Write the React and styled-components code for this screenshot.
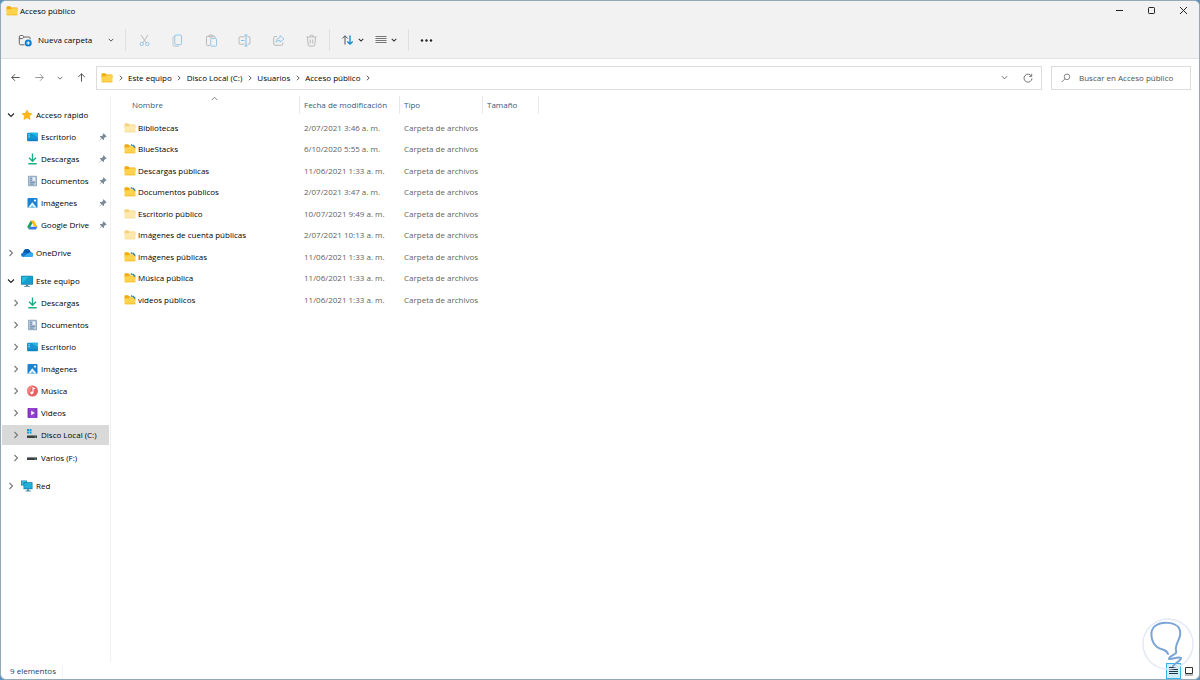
import React from "react";
import styled, { createGlobalStyle } from "styled-components";

const GlobalStyle = createGlobalStyle`
  * {
    box-sizing: border-box;
  }

  body {
    margin: 0;
    background: #5b93bd;
    color: #000;
    font-family: "Open Sans", "Segoe UI", sans-serif;
    font-size: 8px;
    line-height: 12px;
  }

  button,
  input {
    margin: 0;
    padding: 0;
    border: 0;
    background: none;
    color: inherit;
    font: inherit;
  }

  svg {
    display: block;
    flex: none;
  }
`;

const Window = styled.div`
  position: relative;
  display: flex;
  flex-direction: column;
  min-height: 100vh;
  border: 1px solid #93a9b5;
  border-radius: 6px;
  background: #fff;
  overflow: hidden;
`;

const Chrome = styled.header`
  background: #f2f2f2;
  border-bottom: 1px solid #e2e2e2;
`;

const TitleBar = styled.div`
  display: flex;
  align-items: center;
  justify-content: space-between;
  height: 19px;
  padding-left: 5px;
`;

const Title = styled.h1`
  display: flex;
  align-items: center;
  gap: 2px;
  margin: 0;
  font-size: 8px;
  font-weight: 500;
`;

const WindowControls = styled.div`
  display: flex;
`;

const ControlButton = styled.button`
  display: flex;
  align-items: center;
  justify-content: center;
  width: 32px;
  height: 19px;
`;

const Toolbar = styled.div`
  display: flex;
  align-items: center;
  height: 38px;
  padding: 2px 12px 0;
`;

const NewButton = styled.button`
  display: flex;
  align-items: center;
  gap: 6px;
  width: 101px;
  padding-left: 5px;
  font-weight: 500;

  svg:last-child {
    margin-left: auto;
  }
`;

const ToolDivider = styled.span`
  width: 1px;
  height: 22px;
  margin-left: ${props => props.$before}px;
  margin-right: ${props => props.$after}px;
  background: #e0e0e0;
`;

const ToolGroup = styled.div`
  display: flex;
`;

const ToolButton = styled.button`
  display: flex;
  align-items: center;
  justify-content: center;
  gap: 4px;
  width: ${props => (props.$wide ? "34px" : "33px")};
  height: 24px;
`;

const NavRow = styled.div`
  display: flex;
  align-items: center;
  height: 37px;
  padding: 0 8px 0 2px;
`;

const NavButton = styled.button`
  display: flex;
  align-items: center;
  justify-content: center;
  width: ${props => (props.$narrow ? "18px" : "24px")};
  height: 24px;
`;

const AddressBar = styled.div`
  display: flex;
  flex: 1;
  align-items: center;
  height: 24px;
  margin: 0 9px 0 3px;
  padding: 0 1px 0 4px;
  border: 1px solid #dcdcdc;
`;

const Crumbs = styled.ol`
  display: flex;
  flex: 1;
  align-items: center;
  margin: 0;
  padding: 0;
  list-style: none;
  font-weight: 500;

  li {
    display: flex;
    align-items: center;
  }

  a {
    color: inherit;
    text-decoration: none;
  }
`;

const CrumbArrow = styled.span`
  display: flex;
  justify-content: center;
  width: 15px;
`;

const SearchBox = styled.label`
  display: flex;
  align-items: center;
  gap: 8px;
  width: 140px;
  height: 24px;
  padding: 0 9px;
  border: 1px solid #dcdcdc;

  input {
    flex: 1;
    min-width: 0;
    outline: 0;
  }

  input::placeholder {
    color: #505050;
    opacity: 1;
  }
`;

const Body = styled.div`
  display: flex;
  flex: 1;
`;

const Sidebar = styled.nav`
  width: 110px;
  padding: 9px 1px 0;
  border-right: 1px solid #f0f0f0;
`;

const TreeGroup = styled.ul`
  display: flex;
  flex-direction: column;
  gap: 3px;
  margin: 0 0 9px;
  padding: 0;
  list-style: none;
`;

const TreeRow = styled.li`
  display: flex;
  align-items: center;
  height: ${props => (props.$selected ? "20px" : "19px")};
  padding-left: ${props => (props.$nested ? "5px" : "0")};
  padding-right: 2px;
  background: ${props => (props.$selected ? "#d9d9d9" : "transparent")};
`;

const Expander = styled.button`
  display: flex;
  align-items: center;
  justify-content: center;
  width: 18px;
  height: 19px;
`;

const ExpanderSpace = styled.span`
  width: 18px;
`;

const TreeLink = styled.a`
  display: flex;
  flex: 1;
  align-items: center;
  gap: 2px;
  color: inherit;
  font-weight: 500;
  text-decoration: none;
  white-space: nowrap;
`;

const Content = styled.main`
  flex: 1;
  padding-left: 11px;
`;

const FileTable = styled.table`
  border-collapse: collapse;
  table-layout: fixed;
  width: 417px;
  text-align: left;

  th,
  td {
    padding: 0 0 0 4px;
    font-weight: 400;
    white-space: nowrap;
  }

  td {
    color: #5f5f5f;
  }

  tbody tr {
    height: 21px;
  }

  tbody tr:nth-child(even) {
    height: 22px;
  }
`;

const NameCol = styled.col`
  width: 178px;
`;

const DateCol = styled.col`
  width: 100px;
`;

const TypeCol = styled.col`
  width: 83px;
`;

const SizeCol = styled.col`
  width: 56px;
`;

const HeadCell = styled.th`
  position: relative;
  height: 21px;
  color: #3a5779;
  vertical-align: top;

  > span {
    display: block;
    height: 18px;
    padding-left: ${props => (props.$first ? "6px" : "0")};
    border-right: 1px solid #e8e8e8;
    line-height: 18px;
  }
`;

const SortMark = styled.svg`
  position: absolute;
  top: 0;
  left: 50%;
`;

const FileName = styled.a`
  display: flex;
  align-items: center;
  gap: 2px;
  margin-left: -2px;
  color: #000;
  font-weight: 500;
  text-decoration: none;
`;

const StatusBar = styled.footer`
  display: flex;
  align-items: center;
  justify-content: space-between;
  height: 17px;
  padding: 0 3px 0 9px;
  color: #1a3f60;
`;

const Count = styled.span`
  padding-right: 6px;
  border-right: 1px solid #f2f2f2;
  font-weight: 500;
`;

const ViewButtons = styled.div`
  display: flex;
`;

const ViewButton = styled.button`
  display: flex;
  align-items: center;
  justify-content: center;
  width: 15px;
  height: 16px;
  border: 1px solid ${props => (props.$active ? "#35b3ea" : "transparent")};
  background: ${props => (props.$active ? "#cfeefa" : "transparent")};
`;

const Watermark = styled.svg`
  position: absolute;
  right: 4px;
  bottom: 8px;
  pointer-events: none;
`;

const chevronPaths = {
  right: "M2.5 1 5.5 4 2.5 7",
  down: "M1 2.5 4 5.5 7 2.5"
};

const Chevron = ({ to = "right", size = 7, color = "#333", weight = 1.1 }) => (
  <svg width={size} height={size} viewBox="0 0 8 8" fill="none">
    <path d={chevronPaths[to]} stroke={color} strokeWidth={weight} />
  </svg>
);

const FolderIcon = ({ size = 12, variant = "full" }) => {
  const pale = variant === "pale";
  return (
    <svg width={size} height={size} viewBox="0 0 12 12">
      <path
        d="M.5 2.2q0-.9.9-.9h2.8l1.3 1.2h5.1q.9 0 .9.9V6H.5z"
        fill={pale ? "#f5d37c" : "#f0ab0c"}
      />
      {variant === "linked" && <path d="M6.5 1.8h3.8l1.2 1.2V5h-5z" fill="#e4f0ee" />}
      <path
        d="M.5 4.2h4.2l1.2-.9h4.7q.9 0 .9.9v5.2q0 .9-.9.9H1.4q-.9 0-.9-.9z"
        fill={pale ? "#fde9ae" : "#ffd34e"}
      />
      <path d="M.7 9.8h10.6" stroke={pale ? "#f7dc96" : "#f5bd2d"} strokeWidth=".8" />
      {variant === "linked" && (
        <path d="M7 1.5 8.2 2.6M8.8 2 11 4.6" stroke="#227fa8" strokeWidth="1.2" />
      )}
    </svg>
  );
};

const PinIcon = () => (
  <svg width="8" height="8" viewBox="0 0 8 8">
    <path
      d="M4.6.3 7.7 3.4 6.9 4 6.3 3.9 5 5.2 5 6.7 4.3 7.1 2.8 5.6.7 7.6.4 7.3 2.4 5.2.9 3.7 1.3 3 2.8 3 4.1 1.7 4 1.1z"
      fill="#7b8b99"
    />
  </svg>
);

const Drive = ({ y = 5 }) => (
  <>
    <rect x="2" y={y} width="10" height="3" rx=".5" fill="#3b3f43" />
    <path d={`M2 ${y + 0.4}h10`} stroke="#a4a9ad" strokeWidth=".8" />
    <path d={`M9.5 ${y + 2}h1.5`} stroke="#69d28b" strokeWidth=".7" />
  </>
);

const treeDrawings = {
  star: (
    <path
      d="M7 2 8.5 5.1 12 5.6 9.5 8 10.1 11.5 7 9.8 3.9 11.5 4.5 8 2 5.6 5.5 5.1z"
      fill="#fdb813"
      stroke="#f2a00d"
      strokeWidth=".5"
    />
  ),
  desktop: (
    <>
      <rect x="2" y="2.8" width="11" height="8.4" rx=".8" fill="#1595d3" />
      <path d="M6 2.8h6.2q.8 0 .8.8v3.9z" fill="#28b7e5" />
      <path d="M3.5 4.8h1.2M3.5 6.8h1.2" stroke="#d8f4ff" />
      <path d="M3.5 10.1h8" stroke="#0768a8" strokeWidth=".8" />
    </>
  ),
  download: (
    <path
      d="M7.5 1.5V9M4 5.8 7.5 9.3 11 5.8M3.3 11.8h8.4"
      fill="none"
      stroke="#1cae85"
      strokeWidth="1.4"
    />
  ),
  document: (
    <>
      <rect x="3" y="1.8" width="9" height="10.4" rx=".8" fill="#91aac2" />
      <path d="M4 2.8h7v8.4H4z" fill="#b9cbdc" />
      <path d="M5 4.3h2M5 6.3h2M5 8.3h5M5 10.1h3.5" stroke="#5d7d9d" strokeWidth=".9" />
      <path d="M7.8 3.6h2.2v3H7.8z" fill="#eff6fb" />
    </>
  ),
  picture: (
    <>
      <rect x="2.5" y="2" width="10" height="10" rx="1" fill="#1b83d3" />
      <path d="M3 11.7 7.3 6.2l4.5 5.5z" fill="#e7f6ff" />
      <path d="M5.3 11.8 7.3 9.3l2.2 2.5z" fill="#67b8ec" />
      <circle cx="10" cy="4.6" r="1.1" fill="#fff" />
    </>
  ),
  drive: (
    <>
      <path d="M5.8 2.5h3.2l3.5 6.2H9.2z" fill="#fbc116" />
      <path d="M5.8 2.5 2.3 8.7 3.9 11.4 7.4 5.2z" fill="#1aa260" />
      <path d="M5.4 8.7h7.1l-1.6 2.7H3.9z" fill="#3978e8" />
    </>
  ),
  cloud: (
    <>
      <path
        d="M3.6 11Q1 11 1 8.8 1 6.8 3.2 6.4 4 3 7 3q2.6 0 3.5 2.9 2.6.2 2.6 2.5 0 2.6-2.5 2.6z"
        fill="#1579cf"
      />
      <path d="M3.2 6.4Q4 3 7 3q2.6 0 3.5 2.9L7.6 7.5z" fill="#075cae" />
      <path d="M3 11 8 7.3q4.5-2 5.1 1.1 0 2.6-2.5 2.6z" fill="#35a9eb" />
    </>
  ),
  computer: (
    <>
      <rect x="1" y="1.8" width="12" height="9" rx=".8" fill="#1681ad" />
      <path d="M1.8 2.6h10.4v6.8H1.8z" fill="#27bbdc" />
      <path d="M1.8 9.4 9 2.6h3.2v6.8z" fill="#179dcb" />
      <path d="M5.8 10.8h2.4v1.2H10v.8H4v-.8h1.8z" fill="#4e8194" />
    </>
  ),
  music: (
    <>
      <circle cx="7.5" cy="7" r="5.5" fill="#e65f63" />
      <path d="M3.5 10.7A5.5 5.5 0 0 1 7.5 1.5z" fill="#f1877d" />
      <path d="M8 9V3.7l2 1.3" fill="none" stroke="#fff" strokeWidth="1.1" />
      <circle cx="6.7" cy="9" r="1.4" fill="#fff" />
    </>
  ),
  video: (
    <>
      <rect x="2.5" y="2" width="10" height="10" rx=".7" fill="#9541cf" />
      <path d="M3.8 2.5v9M11.2 2.5v9" stroke="#54208f" strokeDasharray="1 1" />
      <path d="m6.2 4.8 3.6 2.2-3.6 2.3z" fill="#fff" />
    </>
  ),
  system: (
    <>
      <path d="M2 1h2v2H2zM4.5 1h2v2h-2zM2 3.5h2v2H2zM4.5 3.5h2v2h-2z" fill="#159bd8" />
      <Drive y={7} />
    </>
  ),
  disk: <Drive y={6} />,
  network: (
    <>
      <path d="M1 1.5h6v5H1z" fill="#157fac" />
      <path d="M1.7 2.1h4.7v3.6H1.7z" fill="#34c4dd" />
      <path d="M3.5 3.2H12.5v7H3.5z" fill="#0b7eae" />
      <path d="M4.3 4h7.5v5.4H4.3z" fill="#24afd8" />
      <path d="M7 10.2h2v1.4h1.8v.9h-5v-.9H7z" fill="#4588a0" />
    </>
  )
};

const TreeIcon = ({ name }) => (
  <svg width="14" height="14" viewBox="0 0 14 14">
    {treeDrawings[name]}
  </svg>
);

const toolDrawings = {
  Cortar: (
    <>
      <path d="M3 1 8.4 9M10 1 4.6 9" stroke="#b4b4b4" />
      <circle cx="3.7" cy="10" r="1.7" stroke="#8dc4e8" />
      <circle cx="9.3" cy="10" r="1.7" stroke="#8dc4e8" />
    </>
  ),
  Copiar: (
    <>
      <path d="M4 2.5H3q-1 0-1 1v7.7q0 1 1 1h5" stroke="#b9c3c9" />
      <rect x="3.8" y="1" width="6.7" height="9.7" rx="1" stroke="#8dc4e8" />
    </>
  ),
  Pegar: (
    <>
      <path d="M5 11.5H2.3q-.8 0-.8-.8V3q0-.8.8-.8h7q.8 0 .8.8v1" stroke="#b4b4b4" />
      <rect x="4" y="1" width="3.8" height="2" rx=".7" stroke="#b4b4b4" />
      <rect x="5.7" y="4.5" width="5.8" height="7.7" rx=".8" stroke="#8dc4e8" />
    </>
  ),
  "Cambiar nombre": (
    <>
      <path d="M6.5 2.8H2q-1 0-1 1v5.4q0 1 1 1h4.5M9.5 2.8H11q1 0 1 1v5.4q0 1-1 1H9.5" stroke="#b4b4b4" />
      <path d="M6.5 1h3M8 1v11M6.5 12h3M3 6.5h3.5" stroke="#72b9e8" />
    </>
  ),
  Compartir: (
    <>
      <path d="M5 2.5H3q-1.3 0-1.3 1.3V10q0 1.3 1.3 1.3h6.5q1.3 0 1.3-1.3V8.5" stroke="#b4b4b4" />
      <path d="M8 1.5 12 5 8 8.3V6.4Q5.5 6.2 4 8.4 4.2 4 8 3.6z" stroke="#8dc4e8" />
    </>
  ),
  Eliminar: (
    <>
      <path d="M1.3 3h10.4M4.5 3q0-1.8 2-1.8t2 1.8M2.5 3.3l.7 7.9q.1.8.9.8h4.8q.8 0 .9-.8l.7-7.9" stroke="#b4b4b4" />
      <path d="M5.3 5.5v4M7.7 5.5v4" stroke="#b4b4b4" />
    </>
  )
};

const ToolIcon = ({ name }) => (
  <svg width="13" height="13" viewBox="0 0 13 13" fill="none" strokeWidth=".9">
    {toolDrawings[name]}
  </svg>
);

const treeGroups = [
  [
    { label: "Acceso rápido", icon: "star", open: true },
    { label: "Escritorio", icon: "desktop", pinned: true },
    { label: "Descargas", icon: "download", pinned: true },
    { label: "Documentos", icon: "document", pinned: true },
    { label: "Imágenes", icon: "picture", pinned: true },
    { label: "Google Drive", icon: "drive", pinned: true }
  ],
  [{ label: "OneDrive", icon: "cloud" }],
  [
    { label: "Este equipo", icon: "computer", open: true },
    { label: "Descargas", icon: "download", nested: true },
    { label: "Documentos", icon: "document", nested: true },
    { label: "Escritorio", icon: "desktop", nested: true },
    { label: "Imágenes", icon: "picture", nested: true },
    { label: "Música", icon: "music", nested: true },
    { label: "Videos", icon: "video", nested: true },
    { label: "Disco Local (C:)", icon: "system", nested: true, selected: true },
    { label: "Varios (F:)", icon: "disk", nested: true }
  ],
  [{ label: "Red", icon: "network" }]
];

const files = [
  { name: "Bibliotecas", date: "2/07/2021 3:46 a. m.", variant: "pale" },
  { name: "BlueStacks", date: "6/10/2020 5:55 a. m.", variant: "linked" },
  { name: "Descargas públicas", date: "11/06/2021 1:33 a. m.", variant: "full" },
  { name: "Documentos públicos", date: "2/07/2021 3:47 a. m.", variant: "linked" },
  { name: "Escritorio público", date: "10/07/2021 9:49 a. m.", variant: "pale" },
  { name: "Imágenes de cuenta públicas", date: "2/07/2021 10:13 a. m.", variant: "pale" },
  { name: "Imágenes públicas", date: "11/06/2021 1:33 a. m.", variant: "linked" },
  { name: "Música pública", date: "11/06/2021 1:33 a. m.", variant: "linked" },
  { name: "videos públicos", date: "11/06/2021 1:33 a. m.", variant: "linked" }
];

const crumbs = ["Este equipo", "Disco Local (C:)", "Usuarios", "Acceso público"];

const WindowHeader = () => (
  <Chrome>
    <TitleBar>
      <Title>
        <FolderIcon />
        Acceso público
      </Title>
      <WindowControls>
        <ControlButton aria-label="Minimizar">
          <svg width="9" height="9" viewBox="0 0 9 9">
            <path d="M1 4.5h7" stroke="#222" />
          </svg>
        </ControlButton>
        <ControlButton aria-label="Maximizar">
          <svg width="9" height="9" viewBox="0 0 9 9">
            <rect x="1.5" y="1.5" width="6" height="6" rx=".8" fill="none" stroke="#222" />
          </svg>
        </ControlButton>
        <ControlButton aria-label="Cerrar">
          <svg width="9" height="9" viewBox="0 0 9 9">
            <path d="m1 1 7 7M8 1 1 8" stroke="#222" />
          </svg>
        </ControlButton>
      </WindowControls>
    </TitleBar>
    <Toolbar>
      <NewButton>
        <svg width="14" height="13" viewBox="0 0 14 13" fill="none">
          <path
            d="M6.5 10.8H2.6q-1.3 0-1.3-1.3V2.8q0-1.3 1.3-1.3h2L6.2 3h4.7q1.3 0 1.3 1.3v1M1.3 4.6h3.3L6.2 3"
            stroke="#555"
            strokeWidth=".9"
          />
          <circle cx="10.2" cy="9" r="3.5" fill="#0b80d0" />
          <path d="M10.2 7.3v3.4M8.5 9h3.4" stroke="#fff" />
        </svg>
        Nueva carpeta
        <Chevron to="down" size={6} />
      </NewButton>
      <ToolDivider $before={11} $after={1} />
      <ToolGroup>
        {Object.keys(toolDrawings).map((name, index) => (
          <ToolButton key={name} $wide={index % 2 === 0} aria-label={name} disabled>
            <ToolIcon name={name} />
          </ToolButton>
        ))}
      </ToolGroup>
      <ToolDivider $before={1} $after={5} />
      <ToolButton $wide aria-label="Ordenar">
        <svg width="13" height="12" viewBox="0 0 13 12" fill="none">
          <path d="M4 10.5V1.8M1.3 4.5 4 1.8l2.7 2.7" stroke="#555" />
          <path d="M9 1.5v8.7M6.3 7.5 9 10.2l2.7-2.7" stroke="#0f86d2" strokeWidth="1.3" />
        </svg>
        <Chevron to="down" size={6} weight={1.4} />
      </ToolButton>
      <ToolButton $wide aria-label="Ver">
        <svg width="12" height="10" viewBox="0 0 12 10">
          <path d="M.5 1.5h11M.5 3.5h11M.5 5.5h11M.5 7.5h11" stroke="#777" />
        </svg>
        <Chevron to="down" size={6} weight={1.4} />
      </ToolButton>
      <ToolDivider $before={5} $after={1} />
      <ToolButton aria-label="Ver más">
        <svg width="13" height="5" viewBox="0 0 13 5" fill="#222">
          <circle cx="2" cy="2.5" r="1.2" />
          <circle cx="6.5" cy="2.5" r="1.2" />
          <circle cx="11" cy="2.5" r="1.2" />
        </svg>
      </ToolButton>
    </Toolbar>
  </Chrome>
);

const Navigation = () => (
  <NavRow>
    <NavButton aria-label="Atrás">
      <svg width="9" height="9" viewBox="0 0 9 9" fill="none">
        <path d="M8.7 4.5H.8M4 1.2.8 4.5 4 7.8" stroke="#555" />
      </svg>
    </NavButton>
    <NavButton aria-label="Adelante">
      <svg width="9" height="9" viewBox="0 0 9 9" fill="none">
        <path d="M.3 4.5h7.9M5 1.2l3.2 3.3L5 7.8" stroke="#999" />
      </svg>
    </NavButton>
    <NavButton $narrow aria-label="Ubicaciones recientes">
      <Chevron to="down" size={6} color="#555" />
    </NavButton>
    <NavButton aria-label="Arriba">
      <svg width="9" height="9" viewBox="0 0 9 9" fill="none">
        <path d="M4.5 8.7V.8M1.2 4 4.5.8 7.8 4" stroke="#555" />
      </svg>
    </NavButton>
    <AddressBar>
      <FolderIcon />
      <Crumbs>
        <li>
          <CrumbArrow>
            <Chevron size={6} />
          </CrumbArrow>
        </li>
        {crumbs.map(crumb => (
          <li key={crumb}>
            <a href="#ruta">{crumb}</a>
            <CrumbArrow>
              <Chevron size={6} />
            </CrumbArrow>
          </li>
        ))}
      </Crumbs>
      <NavButton aria-label="Direcciones anteriores">
        <Chevron to="down" color="#666" />
      </NavButton>
      <NavButton aria-label="Actualizar">
        <svg width="10" height="10" viewBox="0 0 10 10" fill="none">
          <path d="M8.5 3.2A4 4 0 1 0 9 5.3M8.7.8v2.6H6.1" stroke="#777" />
        </svg>
      </NavButton>
    </AddressBar>
    <SearchBox>
      <svg width="10" height="10" viewBox="0 0 10 10" fill="none">
        <circle cx="6" cy="3.8" r="2.8" stroke="#777" strokeWidth=".9" />
        <path d="M4 5.8.8 9" stroke="#777" strokeWidth=".9" />
      </svg>
      <input type="text" aria-label="Buscar" placeholder="Buscar en Acceso público" />
    </SearchBox>
  </NavRow>
);

const TreeItem = ({ item }) => (
  <TreeRow $nested={item.nested || item.pinned} $selected={item.selected}>
    {item.pinned ? (
      <ExpanderSpace />
    ) : (
      <Expander aria-label={`Expandir ${item.label}`}>
        <Chevron
          to={item.open ? "down" : "right"}
          size={8}
          color={item.open ? "#222" : "#777"}
        />
      </Expander>
    )}
    <TreeLink href="#carpeta">
      <TreeIcon name={item.icon} />
      {item.label}
    </TreeLink>
    {item.pinned && <PinIcon />}
  </TreeRow>
);

const FileList = () => (
  <FileTable>
    <colgroup>
      <NameCol />
      <DateCol />
      <TypeCol />
      <SizeCol />
    </colgroup>
    <thead>
      <tr>
        <HeadCell $first aria-sort="ascending">
          <span>Nombre</span>
          <SortMark width="7" height="5" viewBox="0 0 7 5">
            <path d="m.8 4 2.7-2.7L6.2 4" fill="none" stroke="#777" strokeWidth=".9" />
          </SortMark>
        </HeadCell>
        <HeadCell>
          <span>Fecha de modificación</span>
        </HeadCell>
        <HeadCell>
          <span>Tipo</span>
        </HeadCell>
        <HeadCell>
          <span>Tamaño</span>
        </HeadCell>
      </tr>
    </thead>
    <tbody>
      {files.map(file => (
        <tr key={file.name}>
          <td>
            <FileName href="#archivo">
              <FolderIcon variant={file.variant} />
              {file.name}
            </FileName>
          </td>
          <td>{file.date}</td>
          <td>Carpeta de archivos</td>
          <td />
        </tr>
      ))}
    </tbody>
  </FileTable>
);

const App = () => (
  <>
    <GlobalStyle />
    <Window>
      <WindowHeader />
      <Navigation />
      <Body>
        <Sidebar>
          {treeGroups.map(group => (
            <TreeGroup key={group[0].label}>
              {group.map(item => (
                <TreeItem key={item.label} item={item} />
              ))}
            </TreeGroup>
          ))}
        </Sidebar>
        <Content>
          <FileList />
        </Content>
      </Body>
      <StatusBar>
        <Count>9 elementos</Count>
        <ViewButtons>
          <ViewButton $active aria-label="Detalles">
            <svg width="9" height="10" viewBox="0 0 9 10">
              <path d="M0 1.5h9M0 3.5h9M0 5.5h9M0 7.5h9" stroke="#234" />
            </svg>
          </ViewButton>
          <ViewButton aria-label="Iconos grandes">
            <svg width="10" height="10" viewBox="0 0 10 10">
              <path d="M1.5 1.5h7v6h-7z" fill="none" stroke="#333" />
              <path d="M1 9h8" stroke="#777" />
            </svg>
          </ViewButton>
        </ViewButtons>
      </StatusBar>
      <Watermark width="54" height="54" viewBox="0 0 54 54" fill="none">
        <circle cx="27" cy="27" r="25" stroke="#e3e9f5" strokeWidth="1.5" />
        <path
          d="M27 37C25 31 21 34 16 30 10 25 8 14 14 9 21 4 34 5 38 11 42 18 36 24 35 30 34 34 36 33 35 36 32 39 28 39 28 42 31 43 37 39 40 41 40 44 35 45 32 49"
          stroke="#79a4d5"
          strokeWidth="2"
          strokeLinecap="round"
          strokeLinejoin="round"
        />
      </Watermark>
    </Window>
  </>
);

export default App;
